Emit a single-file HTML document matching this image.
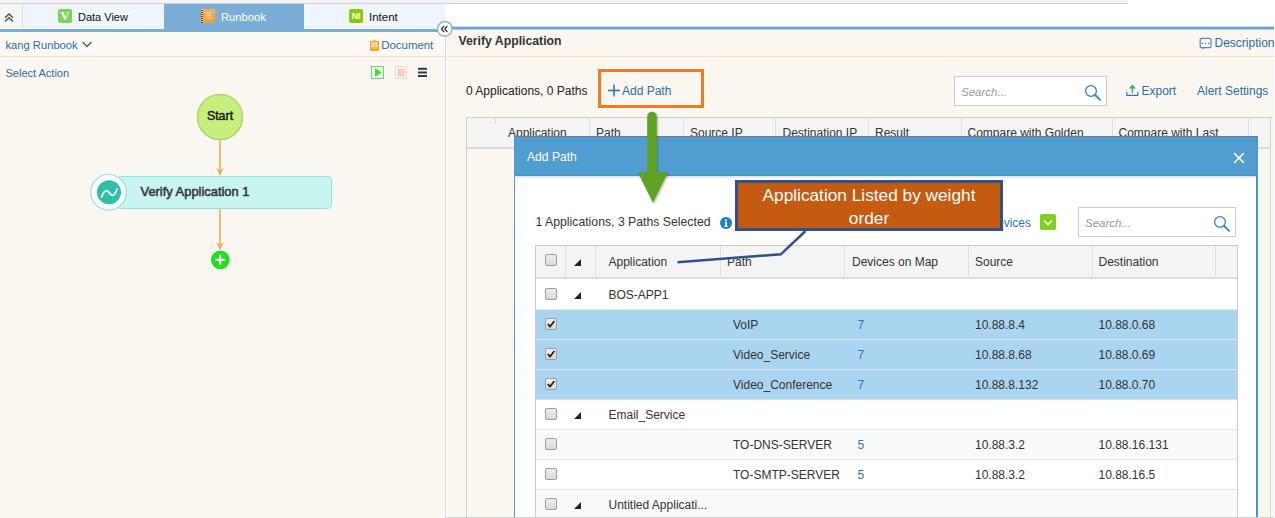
<!DOCTYPE html>
<html><head><meta charset="utf-8">
<style>
*{margin:0;padding:0;box-sizing:border-box}
html,body{width:1275px;height:518px;overflow:hidden;background:#fff;font-family:"Liberation Sans",sans-serif;color:#333}
.a{position:absolute}
.t{position:absolute;white-space:nowrap;line-height:14px;font-size:12px}
.cb{position:absolute;width:12px;height:12px;border:1px solid #9d9d9d;border-radius:2px;background:linear-gradient(#eeeeee,#d9d9d9)}
.tri{position:absolute;width:0;height:0;border-left:7px solid transparent;border-bottom:7px solid #222}
</style></head><body>

<!-- ===== top bar ===== -->
<div class="a" style="left:0;top:0;width:1128px;height:3px;background:#f3f3f3"></div>
<div class="a" style="left:0;top:3px;width:1128px;height:1px;background:#d2d2d2"></div>

<!-- ===== LEFT PANEL ===== -->
<div class="a" style="left:0;top:4px;width:22px;height:24px;background:#f6f6f6"></div><div class="a" style="left:0;top:28px;width:164px;height:1px;background:#f6f9fd"></div><div class="a" style="left:304px;top:28px;width:141px;height:1px;background:#f6f9fd"></div>
<div class="a" style="left:22px;top:4px;width:1px;height:24px;background:#cfe0f0"></div>
<svg class="a" style="left:2px;top:11px" width="14" height="12" viewBox="0 0 14 12"><path d="M3 6.7 L7 3 L11 6.7 M3 10.5 L7 6.8 L11 10.5" fill="none" stroke="#505050" stroke-width="1.5"/></svg>
<div class="a" style="left:23px;top:4px;width:140px;height:24px;background:#eef5fc"></div><div class="a" style="left:163px;top:4px;width:1px;height:24px;background:#f6f9fd"></div>
<div class="a" style="left:164px;top:4px;width:140px;height:25px;background:#7aaed8"></div>
<div class="a" style="left:304px;top:4px;width:141px;height:24px;background:#eef5fc"></div><div class="a" style="left:304px;top:4px;width:1px;height:24px;background:#f6f9fd"></div>
<!-- V icon -->
<div class="a" style="left:58px;top:9px;width:14px;height:14px;background:#7ed35a;border-radius:2px;color:#fff;font-family:'Liberation Serif',serif;font-weight:bold;font-size:13px;line-height:14px;text-align:center">V</div>
<div class="t" style="left:78px;top:10px;font-size:11px;color:#111">Data View</div>
<!-- runbook icon -->
<svg class="a" style="left:200px;top:8px" width="17" height="17">
  <defs><linearGradient id="rb" x1="0" y1="0" x2="0" y2="1"><stop offset="0" stop-color="#f9b160"/><stop offset="1" stop-color="#f79a35"/></linearGradient></defs>
  <rect x="1" y="1" width="14" height="14" fill="url(#rb)"/>
  <rect x="1" y="1" width="2" height="14" fill="#e9c48a"/>
  <path d="M1 2.5 h2 M1 4.5 h2 M1 6.5 h2 M1 8.5 h2 M1 10.5 h2 M1 12.5 h2 M1 14.5 h2" stroke="#4a3f30" stroke-width="0.9"/>
  <rect x="6" y="4" width="5.5" height="0.9" fill="#fde0b8"/>
  <rect x="6" y="6.5" width="5.5" height="1" fill="#fde7c8"/>
  <rect x="6" y="9.4" width="5.5" height="1" fill="#fde7c8"/>
</svg>
<div class="t" style="left:221px;top:10px;font-size:11.2px;color:#fff">Runbook</div>
<!-- NI icon -->
<div class="a" style="left:349px;top:9px;width:14px;height:14px;background:#8dc800;border-radius:2px;color:#fbfff0;font-weight:bold;font-size:9px;line-height:14px;text-align:center;letter-spacing:-0.3px">NI</div>
<div class="t" style="left:369px;top:10px;font-size:11.5px;color:#111">Intent</div>

<div class="a" style="left:0;top:29px;width:445px;height:3px;background:#7aaed8"></div>
<!-- panel body -->
<div class="a" style="left:0;top:32px;width:445px;height:24px;background:#fdfaf5"></div>
<div class="a" style="left:0;top:56px;width:445px;height:1px;background:#f6dfbd"></div>
<div class="a" style="left:0;top:57px;width:445px;height:461px;background:#faf6f0"></div>


<div class="t" style="left:5.5px;top:38px;font-size:11.2px;color:#2b6ea6">kang Runbook</div>
<svg class="a" style="left:81px;top:40px" width="12" height="9" viewBox="0 0 12 9"><path d="M1.5 2 L6 6.5 L10.5 2" fill="none" stroke="#555" stroke-width="1.3"/></svg>
<!-- document icon -->
<svg class="a" style="left:369px;top:39px" width="12" height="13"><circle cx="5.5" cy="1.8" r="1.2" fill="#fbb34a"/><rect x="1" y="2" width="9" height="10" fill="#f9a825"/><rect x="2.3" y="3" width="6.4" height="6" fill="#fcd9a6"/><rect x="5.1" y="3" width="0.8" height="6" fill="#fbbf6a"/><rect x="2.3" y="8" width="6.4" height="1.5" fill="#fbb860"/></svg>
<div class="t" style="left:381.3px;top:38px;font-size:11.4px;color:#2b6ea6">Document</div>

<div class="t" style="left:5.5px;top:66px;font-size:11px;color:#2b6ea6">Select Action</div>
<!-- play -->
<svg class="a" style="left:370px;top:65px" width="60" height="16">
  <rect x="1.5" y="1.5" width="12" height="12" fill="#f1f1f1" stroke="#6ad86a" stroke-width="1"/>
  <path d="M5 4.2 Q5 3.2 5.9 3.7 L11 7 Q11.6 7.5 11 8 L5.9 11.3 Q5 11.8 5 10.8 Z" fill="#3fdc25"/>
  <rect x="25.5" y="1.5" width="11" height="12" fill="#f7f7f7" stroke="#fcd8c0" stroke-width="1"/>
  <rect x="28.5" y="4.5" width="5.5" height="6.5" fill="#fdd2b4" stroke="#f7bcb0" stroke-width="0.8"/>
  <rect x="48" y="2.8" width="9" height="2" fill="#353a40"/>
  <rect x="48" y="6.5" width="9" height="2" fill="#353a40"/>
  <rect x="48" y="10" width="9" height="2" fill="#353a40"/>
</svg>
<!-- flow -->
<svg class="a" style="left:0;top:0" width="445" height="518">
  <circle cx="220" cy="117" r="22.5" fill="#c6ef7e" stroke="#a8d86a" stroke-width="1.5"/>
  <line x1="220" y1="140" x2="220" y2="171" stroke="#ebbd7c" stroke-width="2"/>
  <path d="M216.2 168 Q220 171.2 223.8 168 L220 176 Z" fill="#e9b264"/>
  <rect x="116.5" y="176.5" width="215" height="32" rx="4" fill="#c8f5ef" stroke="#93e4d8" stroke-width="1"/>
  <circle cx="108.5" cy="192.3" r="17.8" fill="#fff" stroke="#93e4d8" stroke-width="1.2"/>
  <circle cx="109" cy="192.3" r="12" fill="#30bfa9"/>
  <path d="M101.5 197 C104 190.5 107 189 109.5 193 C112 197 115 195.5 117 189" fill="none" stroke="#e8fbf6" stroke-width="1.8" stroke-linecap="round"/>
  <line x1="220" y1="209" x2="220" y2="246" stroke="#ebbd7c" stroke-width="2"/>
  <path d="M216.2 242.5 Q220 245.7 223.8 242.5 L220 250.5 Z" fill="#e9b264"/>
  <circle cx="220.3" cy="259.8" r="9.3" fill="#1fe01f"/>
  <path d="M215.2 259.8 H225.2 M220.2 254.8 V264.8" stroke="#fff" stroke-width="2.2"/>
</svg>
<div class="t" style="left:197px;top:109px;width:46px;text-align:center;font-size:12.4px;color:#1a1a1a;-webkit-text-stroke:0.45px #1a1a1a">Start</div>
<div class="t" style="left:140.5px;top:185px;font-size:12.9px;color:#383838;-webkit-text-stroke:0.55px #383838">Verify Application 1</div>

<!-- ===== RIGHT PANEL ===== -->
<div class="a" style="left:445px;top:26px;width:830px;height:1px;background:#c4dbef"></div><div class="a" style="left:445px;top:27px;width:830px;height:2px;background:#69a5d5"></div><div class="a" style="left:445px;top:29px;width:830px;height:1px;background:#a9c8e2"></div>
<div class="a" style="left:445px;top:30px;width:830px;height:488px;background:#faf6f0"></div><div class="a" style="left:445px;top:30px;width:830px;height:1px;background:#fdfbf2"></div>
<div class="a" style="left:445px;top:56px;width:830px;height:1px;background:#f6dfbd"></div>
<div class="a" style="left:445px;top:30px;width:1px;height:488px;background:#d9d9d9"></div><div class="a" style="left:446px;top:30px;width:1px;height:488px;background:#fff"></div>
<!-- collapse circle -->
<svg class="a" style="left:435px;top:19px" width="20" height="20"><circle cx="9.8" cy="9.9" r="7.3" fill="#fff" stroke="#74abd9" stroke-width="1.2"/><path d="M9 7 L6.5 10 L9 13 M12.3 7 L9.8 10 L12.3 13" fill="none" stroke="#383838" stroke-width="1.3"/></svg>

<div class="t" style="left:458.5px;top:34px;font-size:12.25px;font-weight:bold;color:#333">Verify Application</div>
<!-- description -->
<svg class="a" style="left:1199px;top:37px" width="14" height="14"><rect x="1.2" y="1.4" width="10.8" height="9.2" rx="1.3" fill="#fff" stroke="#4a8fcc" stroke-width="1.3"/><path d="M3 10.5 L4.2 12.6 L5.6 10.5 Z" fill="#4a8fcc"/><circle cx="3.6" cy="6.2" r="0.75" fill="#2b70aa"/><circle cx="6.6" cy="6.2" r="0.75" fill="#2b70aa"/><circle cx="9.6" cy="6.2" r="0.75" fill="#2b70aa"/></svg>
<div class="t" style="left:1214.5px;top:36px;font-size:12px;color:#2b6ea6">Description</div>

<div class="t" style="left:466px;top:84px;font-size:12px;color:#222">0 Applications, 0 Paths</div>
<div class="a" style="left:597px;top:68px;width:108px;height:41px;border:1px solid #fffdfb"></div><div class="a" style="left:598px;top:69px;width:106px;height:39px;border:3px solid #f57a1f"></div><div class="a" style="left:601px;top:72px;width:100px;height:33px;border:1px solid #fffdfb"></div>
<svg class="a" style="left:607px;top:84px" width="14" height="13"><path d="M1 6.5 H13 M7 0.5 V12.5" stroke="#2b74b0" stroke-width="1.5"/></svg>
<div class="t" style="left:622px;top:84px;font-size:12px;color:#2b6ea6">Add Path</div>

<!-- search -->
<div class="a" style="left:954px;top:76px;width:153px;height:30px;border:1px solid #cccccc;background:#fff"></div>
<div class="t" style="left:961px;top:85px;font-size:11.5px;font-style:italic;color:#999">Search...</div>
<svg class="a" style="left:1083px;top:82px" width="20" height="20"><circle cx="8" cy="9" r="5.4" fill="none" stroke="#2f86c4" stroke-width="1.3"/><path d="M12.2 13 L17 17.8" stroke="#2f86c4" stroke-width="1.9" stroke-linecap="round"/></svg>
<!-- export -->
<svg class="a" style="left:1125px;top:83px" width="15" height="15"><path d="M7.3 2 V10" fill="none" stroke="#3aae74" stroke-width="1.3"/><path d="M3.8 5.6 L7.3 1.6 L10.8 5.6 Z" fill="#3aae74"/><path d="M1.8 9 V12.3 H12.8 V9" fill="none" stroke="#2b78b8" stroke-width="1.2"/></svg>
<div class="t" style="left:1141.5px;top:84px;font-size:12px;color:#2b6ea6">Export</div>
<div class="t" style="left:1197px;top:84px;font-size:12px;color:#2b6ea6">Alert Settings</div>

<!-- background table -->
<div class="a" style="left:466px;top:117px;width:805px;height:401px;border:1px solid #cfcfcf;border-bottom:none"></div>
<div class="a" style="left:467px;top:118px;width:803px;height:31px;background:#f4f4f4;border-bottom:2px solid #dcdcdc"></div>
<div class="a" style="left:495px;top:118px;width:1px;height:6px;background:#dcdcdc"></div>
<div class="a" style="left:589px;top:118px;width:1px;height:29px;background:#e0e0e0"></div>
<div class="a" style="left:683px;top:118px;width:1px;height:29px;background:#e0e0e0"></div>
<div class="a" style="left:775px;top:118px;width:1px;height:29px;background:#e0e0e0"></div>
<div class="a" style="left:868px;top:118px;width:1px;height:29px;background:#e0e0e0"></div>
<div class="a" style="left:961px;top:118px;width:1px;height:29px;background:#e0e0e0"></div>
<div class="a" style="left:1112px;top:118px;width:1px;height:29px;background:#e0e0e0"></div>
<div class="a" style="left:1248px;top:118px;width:1px;height:29px;background:#e0e0e0"></div>
<div class="t" style="left:508px;top:126px;color:#333">Application</div>
<div class="t" style="left:596px;top:126px;color:#333">Path</div>
<div class="t" style="left:690px;top:126px;color:#333">Source IP</div>
<div class="t" style="left:782.5px;top:126px;color:#333">Destination IP</div>
<div class="t" style="left:875px;top:126px;color:#333">Result</div>
<div class="t" style="left:967.5px;top:126px;color:#333">Compare with Golden</div>
<div class="t" style="left:1118.5px;top:126px;color:#333">Compare with Last</div>

<!-- ===== DIALOG ===== -->
<div class="a" style="left:514px;top:136px;width:744px;height:382px;background:#fff;border:1px solid #4f9bd1;border-right:2px solid #4393d0;border-top:1px solid #777"></div>
<div class="a" style="left:515px;top:137px;width:742px;height:39px;background:#509ed1"></div>
<div class="a" style="left:515px;top:175px;width:741px;height:1px;background:#4293cc"></div><div class="a" style="left:515px;top:176px;width:741px;height:3px;background:linear-gradient(rgba(0,0,0,0.13),rgba(0,0,0,0))"></div>
<div class="t" style="left:527px;top:150px;font-size:12.1px;color:#fff">Add Path</div>
<svg class="a" style="left:1232px;top:151px" width="14" height="14"><path d="M2.6 2.6 L11.4 11.4 M11.4 2.6 L2.6 11.4" stroke="#fff" stroke-width="1.5" stroke-linecap="round"/></svg>

<div class="t" style="left:535.5px;top:215px;font-size:12.25px;color:#333">1 Applications, 3 Paths Selected</div>
<svg class="a" style="left:719px;top:216px" width="14" height="14"><circle cx="7" cy="7" r="6" fill="#1a80c0"/><circle cx="7" cy="3.9" r="1" fill="#fff"/><path d="M5.6 5.7 H7.9 V9.8 H8.8 V10.8 H5.3 V9.8 H6.2 V6.5 H5.6 Z" fill="#fff"/></svg>
<div class="t" style="left:831px;top:216px;width:200px;text-align:right;font-size:12px;color:#2b78b8">Highlight Devices</div>
<div class="a" style="left:1040px;top:214px;width:16px;height:16px;background:#7ed321;border-radius:2px"></div>
<svg class="a" style="left:1040px;top:214px" width="16" height="16"><path d="M4 6.5 L8 10.5 L12 6.5" fill="none" stroke="#fff" stroke-width="1.6"/></svg>
<div class="a" style="left:1078px;top:207px;width:158px;height:30px;border:1px solid #cccccc;background:#fff"></div>
<div class="t" style="left:1085px;top:216px;font-size:11.5px;font-style:italic;color:#999">Search...</div>
<svg class="a" style="left:1212px;top:214px" width="20" height="20"><circle cx="8" cy="8" r="5.4" fill="none" stroke="#2f86c4" stroke-width="1.3"/><path d="M12.2 12 L17 16.8" stroke="#2f86c4" stroke-width="1.9" stroke-linecap="round"/></svg>

<!-- inner table -->
<div id="itab" class="a" style="left:535px;top:245px;width:703px;height:273px;border:1px solid #cccccc;border-bottom:none;background:#fff"></div>
<div class="a" style="left:536px;top:246px;width:701px;height:33px;background:#f4f4f4;border-bottom:2px solid #dddddd"></div>
<!-- header cells -->
<div class="a" style="left:565px;top:246px;width:1px;height:31px;background:#e0e0e0"></div>
<div class="a" style="left:595px;top:246px;width:1px;height:31px;background:#e0e0e0"></div>
<div class="a" style="left:720px;top:246px;width:1px;height:31px;background:#e0e0e0"></div>
<div class="a" style="left:844px;top:246px;width:1px;height:31px;background:#e0e0e0"></div>
<div class="a" style="left:968px;top:246px;width:1px;height:31px;background:#e0e0e0"></div>
<div class="a" style="left:1092px;top:246px;width:1px;height:31px;background:#e0e0e0"></div>
<div class="a" style="left:1215px;top:246px;width:1px;height:31px;background:#e0e0e0"></div>
<div class="cb" style="left:545px;top:254px"></div>
<div class="tri" style="left:574px;top:259px"></div>
<div class="t" style="left:608.5px;top:255px;color:#333">Application</div>
<div class="t" style="left:727px;top:255px;color:#333">Path</div>
<div class="t" style="left:852px;top:255px;color:#333">Devices on Map</div>
<div class="t" style="left:975px;top:255px;color:#333">Source</div>
<div class="t" style="left:1098.5px;top:255px;color:#333">Destination</div>
<div class="a" style="left:536px;top:280px;width:701px;height:30px;background:#ffffff;border-bottom:1px solid #e6e6e6"></div>
<div class="cb" style="left:545px;top:288px"></div>
<div class="tri" style="left:574px;top:292px"></div>
<div class="t" style="left:608.5px;top:288px;color:#333">BOS-APP1</div>
<div class="a" style="left:536px;top:310px;width:701px;height:30px;background:#a9d5f0;border-bottom:1px solid #d6e4ee"></div>
<div class="cb" style="left:545px;top:318px"></div>
<svg class="a" style="left:545px;top:318px" width="12" height="12"><path d="M2.8 6 L5 8.6 L9.4 3" fill="none" stroke="#222" stroke-width="1.8"/></svg>
<div class="t" style="left:733px;top:318px;color:#333">VoIP</div>
<div class="t" style="left:857.5px;top:318px;color:#2b78b8">7</div>
<div class="t" style="left:975px;top:318px;color:#333">10.88.8.4</div>
<div class="t" style="left:1098.5px;top:318px;color:#333">10.88.0.68</div>
<div class="a" style="left:536px;top:340px;width:701px;height:30px;background:#a9d5f0;border-bottom:1px solid #d6e4ee"></div>
<div class="cb" style="left:545px;top:348px"></div>
<svg class="a" style="left:545px;top:348px" width="12" height="12"><path d="M2.8 6 L5 8.6 L9.4 3" fill="none" stroke="#222" stroke-width="1.8"/></svg>
<div class="t" style="left:733px;top:348px;color:#333">Video_Service</div>
<div class="t" style="left:857.5px;top:348px;color:#2b78b8">7</div>
<div class="t" style="left:975px;top:348px;color:#333">10.88.8.68</div>
<div class="t" style="left:1098.5px;top:348px;color:#333">10.88.0.69</div>
<div class="a" style="left:536px;top:370px;width:701px;height:30px;background:#a9d5f0;border-bottom:1px solid #d6e4ee"></div>
<div class="cb" style="left:545px;top:378px"></div>
<svg class="a" style="left:545px;top:378px" width="12" height="12"><path d="M2.8 6 L5 8.6 L9.4 3" fill="none" stroke="#222" stroke-width="1.8"/></svg>
<div class="t" style="left:733px;top:378px;color:#333">Video_Conference</div>
<div class="t" style="left:857.5px;top:378px;color:#2b78b8">7</div>
<div class="t" style="left:975px;top:378px;color:#333">10.88.8.132</div>
<div class="t" style="left:1098.5px;top:378px;color:#333">10.88.0.70</div>
<div class="a" style="left:536px;top:400px;width:701px;height:30px;background:#ffffff;border-bottom:1px solid #e6e6e6"></div>
<div class="cb" style="left:545px;top:408px"></div>
<div class="tri" style="left:574px;top:412px"></div>
<div class="t" style="left:608.5px;top:408px;color:#333">Email_Service</div>
<div class="a" style="left:536px;top:430px;width:701px;height:30px;background:#fafafa;border-bottom:1px solid #e6e6e6"></div>
<div class="cb" style="left:545px;top:438px"></div>
<div class="t" style="left:733px;top:438px;color:#333">TO-DNS-SERVER</div>
<div class="t" style="left:857.5px;top:438px;color:#2b78b8">5</div>
<div class="t" style="left:975px;top:438px;color:#333">10.88.3.2</div>
<div class="t" style="left:1098.5px;top:438px;color:#333">10.88.16.131</div>
<div class="a" style="left:536px;top:460px;width:701px;height:30px;background:#ffffff;border-bottom:1px solid #e6e6e6"></div>
<div class="cb" style="left:545px;top:468px"></div>
<div class="t" style="left:733px;top:468px;color:#333">TO-SMTP-SERVER</div>
<div class="t" style="left:857.5px;top:468px;color:#2b78b8">5</div>
<div class="t" style="left:975px;top:468px;color:#333">10.88.3.2</div>
<div class="t" style="left:1098.5px;top:468px;color:#333">10.88.16.5</div>
<div class="a" style="left:536px;top:490px;width:701px;height:30px;background:#fafafa;border-bottom:1px solid #e6e6e6"></div>
<div class="cb" style="left:545px;top:498px"></div>
<div class="tri" style="left:574px;top:502px"></div>
<div class="t" style="left:608.5px;top:498px;color:#333">Untitled Applicati...</div>
<div class="a" style="left:445px;top:517px;width:830px;height:1px;background:#d0d0d0"></div>
<div class="a" style="left:1270px;top:147px;width:1px;height:370px;background:#d9d9d9"></div><div class="a" style="left:1274px;top:4px;width:1px;height:514px;background:#fff"></div>
<!-- green arrow -->
<svg class="a" style="left:600px;top:100px;overflow:visible" width="100" height="120">
  <defs><filter id="sh" x="-50%" y="-50%" width="200%" height="200%"><feGaussianBlur stdDeviation="1.2"/></filter></defs>
  <g transform="translate(1,1.5)" opacity="0.35" filter="url(#sh)"><path d="M47.2 16.5 A4.8 4.8 0 0 1 56.8 16.5 V72.2 H67.9 L53 102.7 L37.9 72.2 H47.2 Z" fill="#333"/></g>
  <path d="M47.2 16.5 A4.8 4.8 0 0 1 56.8 16.5 V72.2 H67.9 L53 102.7 L37.9 72.2 H47.2 Z" fill="#5fa324"/>
</svg>
<!-- callout -->
<svg class="a" style="left:0;top:0" width="1275" height="518"><polyline points="677.5,262.3 780.8,254.3 805.5,231" fill="none" stroke="#2f528f" stroke-width="2.5"/></svg>
<div class="a" style="left:735px;top:180px;width:268px;height:51px;background:#c55a11;border:3px solid #2f528f"></div>
<div class="a" style="left:735px;top:184px;width:268px;text-align:center;color:#fff;font-size:17.25px;line-height:22.6px;white-space:nowrap">Application Listed by weight<br>order</div>

</body></html>
